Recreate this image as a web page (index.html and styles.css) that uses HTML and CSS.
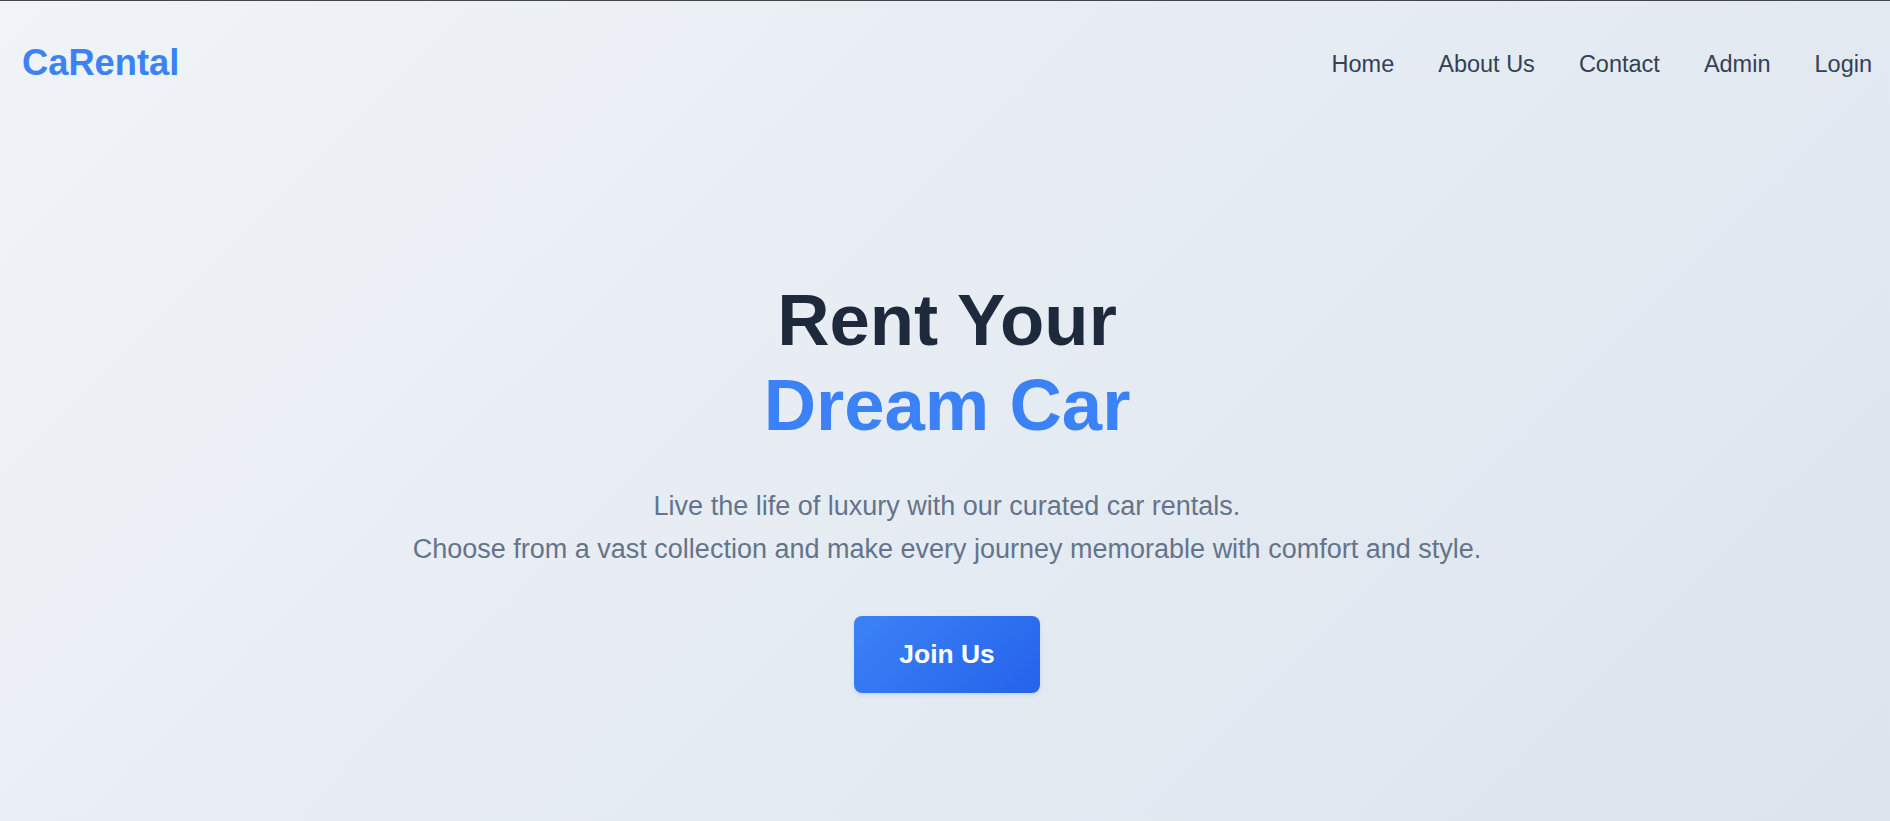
FILE: index.html
```html
<!DOCTYPE html>
<html lang="en">
<head>
<meta charset="utf-8">
<title>CaRental</title>
<link rel="stylesheet" href="styles.css">
</head>
<body>
<div class="page">
  <header class="header">
    <a class="logo" href="#">CaRental</a>
    <nav class="nav">
      <a href="#">Home</a>
      <a href="#">About Us</a>
      <a href="#">Contact</a>
      <a href="#">Admin</a>
      <a href="#">Login</a>
    </nav>
  </header>
  <main class="hero">
    <h1 class="title">Rent Your<br><span class="accent">Dream Car</span></h1>
    <p class="lead">Live the life of luxury with our curated car rentals.<br>Choose from a vast collection and make every journey memorable with comfort and style.</p>
    <a class="btn" href="#">Join Us</a>
  </main>
</div>
</body>
</html>
```
FILE: styles.css
```css
html, body {
  margin: 0;
  padding: 0;
  height: 100%;
}
body {
  font-family: "Liberation Sans", Arial, sans-serif;
  border-top: 1px solid #454545;
  box-sizing: border-box;
  background: linear-gradient(135deg, #f0f4f8 0%, #dde4ee 100%);
  min-height: 100vh;
  overflow: hidden;
}
.page {
  min-height: 820px;
}
.header {
  display: flex;
  justify-content: space-between;
  align-items: center;
  height: 124px;
  padding: 0 18px 0 22px;
}
.logo {
  font-size: 36.3px;
  font-weight: 700;
  color: #3b82f6;
  text-decoration: none;
}
.nav {
  display: flex;
  gap: 44px;
  padding-top: 2px;
}
.nav a {
  font-size: 23.5px;
  color: #334155;
  text-decoration: none;
}
.hero {
  display: flex;
  flex-direction: column;
  align-items: center;
  text-align: center;
  padding-top: 152px;
  padding-left: 4px;
}
.title {
  margin: 0;
  font-size: 72.5px;
  line-height: 85px;
  font-weight: 700;
  color: #1e293b;
}
.accent {
  color: #3b82f6;
}
.lead {
  margin: 38px 0 0;
  font-size: 27px;
  line-height: 1.6;
  color: #64748b;
}
.btn {
  margin-top: 45px;
  display: inline-block;
  padding: 23px 45px;
  font-size: 26.4px;
  font-weight: 700;
  color: #ffffff;
  text-decoration: none;
  border-radius: 8px;
  background: linear-gradient(135deg, #3b82f6 0%, #2563eb 100%);
  box-shadow: 0 2px 4px rgba(37, 99, 235, 0.15);
}
```
